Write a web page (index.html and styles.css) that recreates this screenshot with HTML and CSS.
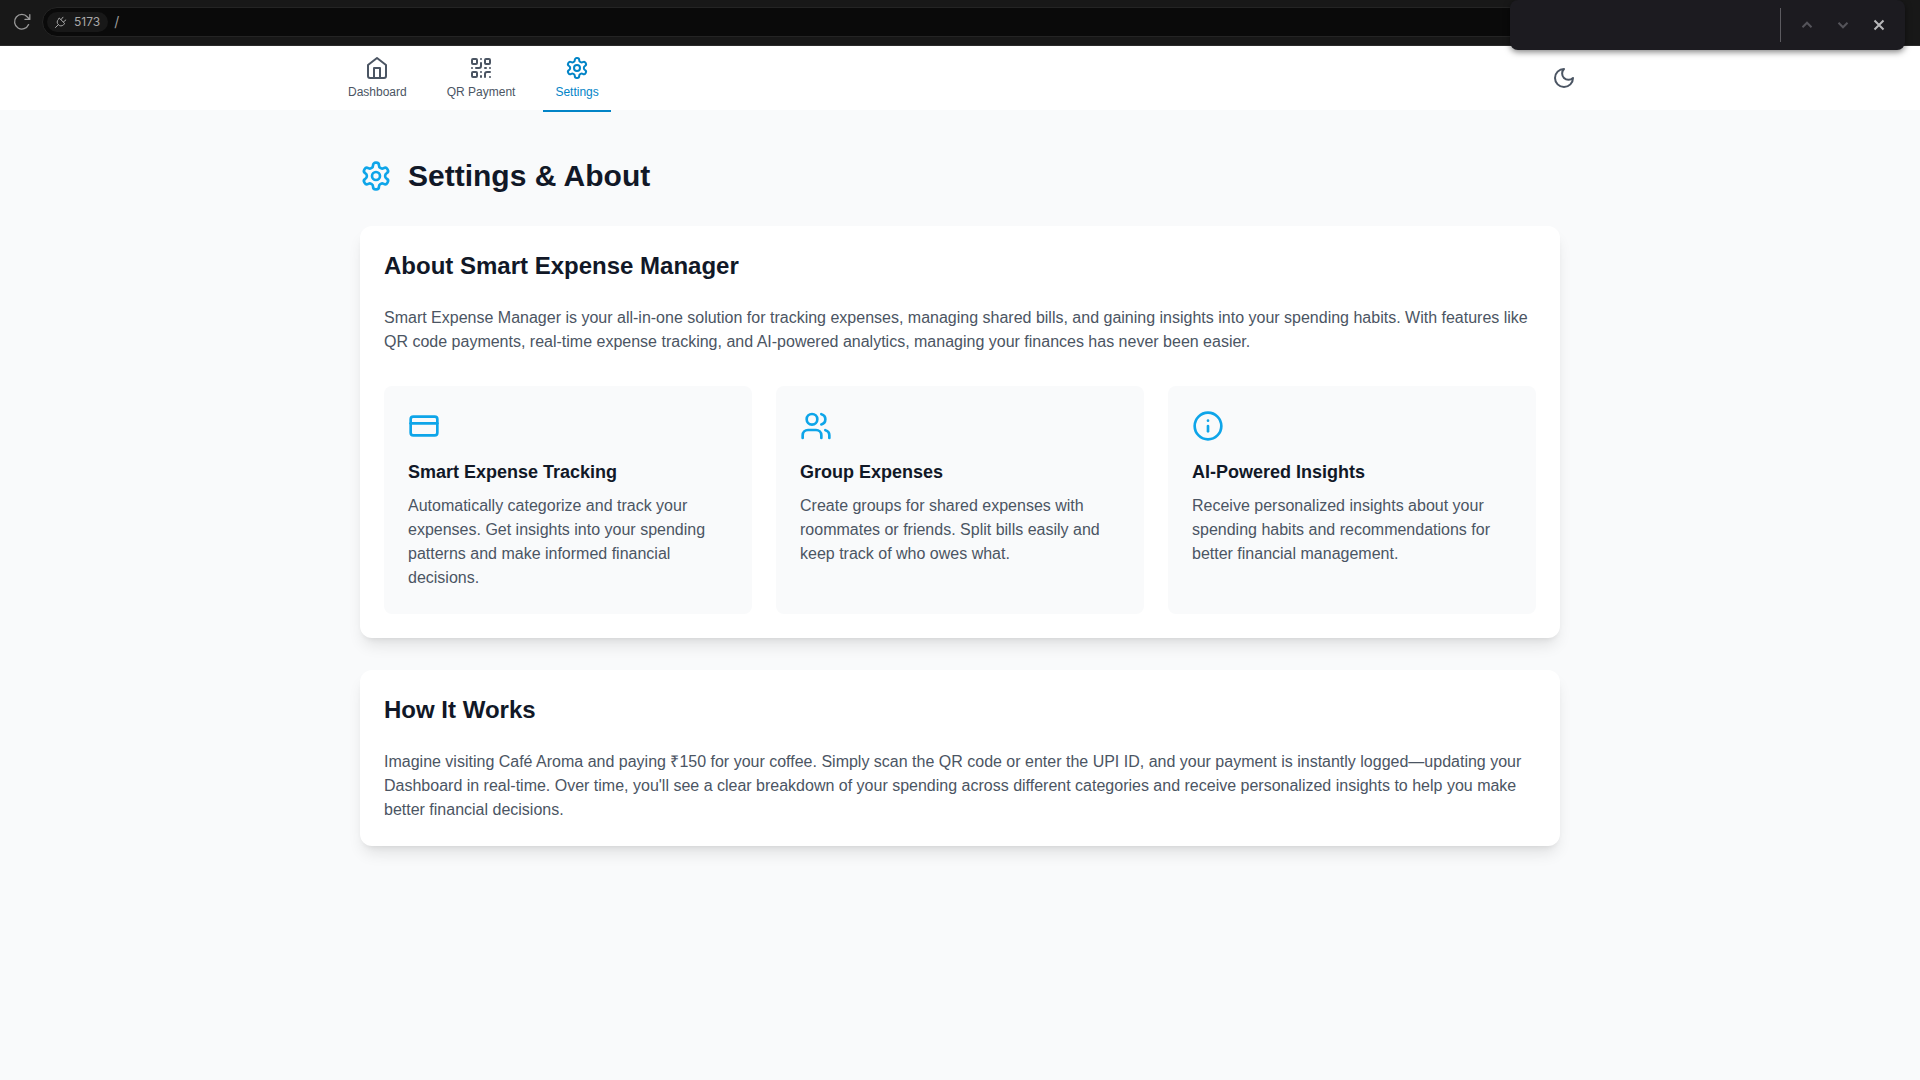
FILE: index.html
```html
<!DOCTYPE html>
<html lang="en">
<head>
<meta charset="utf-8">
<meta name="viewport" content="width=device-width, initial-scale=1">
<title>Smart Expense Manager</title>
<link rel="stylesheet" href="styles.css">
</head>
<body>
<div class="toolbar">
  <button class="toolbar-button" type="button" aria-label="Reload">
    <svg class="reload-icon" viewBox="0 0 18 18"><path d="M15.6 11.6A7.3 7.3 0 1 1 14.4 4L16.6 6.2M16.8 1.6V6.4H12"/></svg>
  </button>
  <div class="address">
    <button class="port" type="button">
      <svg class="plug-icon" viewBox="0 0 12 12"><path d="M0.5 11.5L3.4 8.6M4.4 2.2L9.8 7.6L8.4 8.8A3.2 3.2 0 0 1 3.4 8.6A3.2 3.2 0 0 1 3.2 3.6ZM6 3.6L8 1.2M8.4 6L10.8 4"/></svg>
      <span>5173</span>
    </button>
    <input class="path" type="text" value="/" aria-label="Path">
  </div>
  <div class="find" role="search">
    <input class="find-input" type="text" aria-label="Find in page">
    <div class="find-actions">
      <button class="find-button" type="button" aria-label="Previous" disabled><svg viewBox="0 0 12 12"><path d="M1.5 8.2L6 3.7L10.5 8.2"/></svg></button>
      <button class="find-button" type="button" aria-label="Next" disabled><svg viewBox="0 0 12 12"><path d="M1.5 3.8L6 8.3L10.5 3.8"/></svg></button>
      <button class="find-button find-close" type="button" aria-label="Close"><svg viewBox="0 0 12 12"><path d="M1.5 1.5L10.5 10.5M10.5 1.5L1.5 10.5"/></svg></button>
    </div>
  </div>
</div>

<header class="header">
  <div class="header-inner">
    <nav class="nav">
      <a class="nav-link" href="#dashboard">
        <svg class="icon" viewBox="0 0 24 24"><path d="m3 9 9-7 9 7v11a2 2 0 0 1-2 2H5a2 2 0 0 1-2-2z"/><polyline points="9 22 9 12 15 12 15 22"/></svg>
        <span>Dashboard</span>
      </a>
      <a class="nav-link" href="#qr">
        <svg class="icon" viewBox="0 0 24 24"><rect width="5" height="5" x="3" y="3" rx="1"/><rect width="5" height="5" x="16" y="3" rx="1"/><rect width="5" height="5" x="3" y="16" rx="1"/><path d="M21 16h-3a2 2 0 0 0-2 2v3"/><path d="M21 21v.01"/><path d="M12 7v3a2 2 0 0 1-2 2H7"/><path d="M3 12h.01"/><path d="M12 3h.01"/><path d="M12 16v.01"/><path d="M16 12h1"/><path d="M21 12v.01"/><path d="M12 21v-1"/></svg>
        <span>QR Payment</span>
      </a>
      <a class="nav-link nav-link-active" href="#settings" aria-current="page">
        <svg class="icon" viewBox="0 0 24 24"><path d="M12.22 2h-.44a2 2 0 0 0-2 2v.18a2 2 0 0 1-1 1.73l-.43.25a2 2 0 0 1-2 0l-.15-.08a2 2 0 0 0-2.73.73l-.22.38a2 2 0 0 0 .73 2.73l.15.1a2 2 0 0 1 1 1.72v.51a2 2 0 0 1-1 1.74l-.15.09a2 2 0 0 0-.73 2.73l.22.38a2 2 0 0 0 2.73.73l.15-.08a2 2 0 0 1 2 0l.43.25a2 2 0 0 1 1 1.73V20a2 2 0 0 0 2 2h.44a2 2 0 0 0 2-2v-.18a2 2 0 0 1 1-1.73l.43-.25a2 2 0 0 1 2 0l.15.08a2 2 0 0 0 2.73-.73l.22-.39a2 2 0 0 0-.73-2.73l-.15-.08a2 2 0 0 1-1-1.74v-.5a2 2 0 0 1 1-1.74l.15-.09a2 2 0 0 0 .73-2.73l-.22-.38a2 2 0 0 0-2.73-.73l-.15.08a2 2 0 0 1-2 0l-.43-.25a2 2 0 0 1-1-1.73V4a2 2 0 0 0-2-2z"/><circle cx="12" cy="12" r="3"/></svg>
        <span>Settings</span>
      </a>
    </nav>
    <button class="theme-button" type="button" aria-label="Toggle dark mode">
      <svg class="icon" viewBox="0 0 24 24"><path d="M12 3a6 6 0 0 0 9 9 9 9 0 1 1-9-9Z"/></svg>
    </button>
  </div>
</header>

<main class="main">
  <div class="page-title">
    <svg class="icon icon-large" viewBox="0 0 24 24"><path d="M12.22 2h-.44a2 2 0 0 0-2 2v.18a2 2 0 0 1-1 1.73l-.43.25a2 2 0 0 1-2 0l-.15-.08a2 2 0 0 0-2.73.73l-.22.38a2 2 0 0 0 .73 2.73l.15.1a2 2 0 0 1 1 1.72v.51a2 2 0 0 1-1 1.74l-.15.09a2 2 0 0 0-.73 2.73l.22.38a2 2 0 0 0 2.73.73l.15-.08a2 2 0 0 1 2 0l.43.25a2 2 0 0 1 1 1.73V20a2 2 0 0 0 2 2h.44a2 2 0 0 0 2-2v-.18a2 2 0 0 1 1-1.73l.43-.25a2 2 0 0 1 2 0l.15.08a2 2 0 0 0 2.73-.73l.22-.39a2 2 0 0 0-.73-2.73l-.15-.08a2 2 0 0 1-1-1.74v-.5a2 2 0 0 1 1-1.74l.15-.09a2 2 0 0 0 .73-2.73l-.22-.38a2 2 0 0 0-2.73-.73l-.15.08a2 2 0 0 1-2 0l-.43-.25a2 2 0 0 1-1-1.73V4a2 2 0 0 0-2-2z"/><circle cx="12" cy="12" r="3"/></svg>
    <h1>Settings &amp; About</h1>
  </div>

  <section class="card">
    <h2>About Smart Expense Manager</h2>
    <p>Smart Expense Manager is your all-in-one solution for tracking expenses, managing shared bills, and gaining insights into your spending habits. With features like QR code payments, real-time expense tracking, and AI-powered analytics, managing your finances has never been easier.</p>
    <div class="features">
      <article class="feature">
        <svg class="icon icon-large" viewBox="0 0 24 24"><rect width="20" height="14" x="2" y="5" rx="2"/><line x1="2" x2="22" y1="10" y2="10"/></svg>
        <h3>Smart Expense Tracking</h3>
        <p>Automatically categorize and track your expenses. Get insights into your spending patterns and make informed financial decisions.</p>
      </article>
      <article class="feature">
        <svg class="icon icon-large" viewBox="0 0 24 24"><path d="M16 21v-2a4 4 0 0 0-4-4H6a4 4 0 0 0-4 4v2"/><circle cx="9" cy="7" r="4"/><path d="M22 21v-2a4 4 0 0 0-3-3.87"/><path d="M16 3.13a4 4 0 0 1 0 7.75"/></svg>
        <h3>Group Expenses</h3>
        <p>Create groups for shared expenses with roommates or friends. Split bills easily and keep track of who owes what.</p>
      </article>
      <article class="feature">
        <svg class="icon icon-large" viewBox="0 0 24 24"><circle cx="12" cy="12" r="10"/><path d="M12 16v-4"/><path d="M12 8h.01"/></svg>
        <h3>AI-Powered Insights</h3>
        <p>Receive personalized insights about your spending habits and recommendations for better financial management.</p>
      </article>
    </div>
  </section>

  <section class="card">
    <h2>How It Works</h2>
    <p>Imagine visiting Café Aroma and paying ₹150 for your coffee. Simply scan the QR code or enter the UPI ID, and your payment is instantly logged—updating your Dashboard in real-time. Over time, you'll see a clear breakdown of your spending across different categories and receive personalized insights to help you make better financial decisions.</p>
  </section>
</main>
</body>
</html>
```
FILE: styles.css
```css
*,
*::before,
*::after {
  box-sizing: border-box;
}

body {
  margin: 0;
  min-height: 100vh;
  background: #f9fafb;
  color: #4b5563;
  font-family: "Liberation Sans", Arial, sans-serif;
  font-size: 16px;
  line-height: 24px;
}

h1,
h2,
h3,
p {
  margin: 0;
}

h1,
h2,
h3 {
  color: #111827;
  font-weight: 700;
}

button,
input {
  margin: 0;
  padding: 0;
  border: 0;
  background: none;
  color: inherit;
  font: inherit;
}

svg {
  display: block;
  flex: none;
  fill: none;
  stroke: currentColor;
  stroke-linecap: round;
  stroke-linejoin: round;
}

.icon {
  width: 24px;
  height: 24px;
  stroke-width: 2;
}

.icon-large {
  width: 32px;
  height: 32px;
  color: #0ea5e9;
}

/* Browser toolbar */

.toolbar {
  position: relative;
  display: flex;
  align-items: center;
  gap: 6px;
  height: 46px;
  padding: 0 32px 1px 8px;
  border-bottom: 1px solid #2b2b2b;
  background: #181818;
  color: #9a9a9a;
  font-family: Inter, sans-serif;
  font-size: 12px;
  line-height: 20px;
}

.toolbar-button {
  display: grid;
  place-items: center;
  width: 28px;
  height: 28px;
}

.reload-icon {
  width: 18px;
  height: 18px;
  stroke-width: 1.3;
}

.address {
  display: flex;
  flex: 1;
  align-items: center;
  gap: 6px;
  height: 30px;
  padding: 0 4px;
  border: 1px solid #242424;
  border-radius: 15px;
  background: #0a0a0a;
}

.port {
  display: flex;
  align-items: center;
  gap: 7px;
  height: 20px;
  padding: 0 8px;
  border-radius: 10px;
  background: #181818;
  color: #a8a8a8;
}

.plug-icon {
  width: 12px;
  height: 12px;
  stroke-width: 1;
}

.path {
  flex: 1;
  font-size: 14px;
}

.find {
  position: absolute;
  top: 0;
  right: 15px;
  display: flex;
  align-items: center;
  width: 395px;
  height: 50px;
  padding: 8px;
  border-radius: 8px;
  background: #1c1b20;
  box-shadow: 0 2px 6px rgba(0, 0, 0, 0.5);
}

.find-input {
  flex: 1;
  min-width: 0;
}

.find-actions {
  display: flex;
  align-items: center;
  gap: 8px;
  height: 34px;
  padding: 0 4px 0 12px;
  border-left: 1px solid #5c5b60;
}

.find-button {
  display: grid;
  place-items: center;
  width: 28px;
  height: 28px;
  color: #55545a;
}

.find-button svg {
  width: 12px;
  height: 12px;
  stroke-width: 2;
  stroke-linecap: butt;
  stroke-linejoin: miter;
}

.find-close {
  color: #b8b8ba;
}

/* App header */

.header {
  background: #ffffff;
}

.header-inner {
  display: flex;
  align-items: center;
  justify-content: space-between;
  max-width: 1280px;
  height: 64px;
  margin: 0 auto;
  padding: 0 16px;
}

.nav {
  display: flex;
  align-self: stretch;
  gap: 16px;
}

.nav-link {
  display: flex;
  flex-direction: column;
  align-items: center;
  gap: 4px;
  margin-bottom: -2px;
  padding: 10px 12px;
  border-bottom: 2px solid transparent;
  color: #4b5563;
  font-size: 12px;
  line-height: 16px;
  text-decoration: none;
}

.nav-link-active {
  border-color: #0284c7;
  color: #0284c7;
}

.theme-button {
  padding: 8px;
  border-radius: 8px;
}

/* Page content */

.main {
  display: grid;
  gap: 32px;
  max-width: 1232px;
  margin: 0 auto;
  padding: 48px 16px;
}

.page-title {
  display: flex;
  align-items: center;
  gap: 16px;
}

.page-title h1 {
  font-size: 30px;
  line-height: 36px;
}

.card {
  padding: 24px;
  border-radius: 12px;
  background: #ffffff;
  box-shadow: 0 10px 15px -3px rgba(0, 0, 0, 0.1), 0 4px 6px -4px rgba(0, 0, 0, 0.1);
}

.card h2 {
  margin-bottom: 24px;
  font-size: 24px;
  line-height: 32px;
}

.features {
  display: grid;
  grid-template-columns: repeat(auto-fit, minmax(280px, 1fr));
  gap: 24px;
  margin-top: 32px;
}

.feature {
  padding: 24px;
  border-radius: 8px;
  background: #f9fafb;
}

.feature h3 {
  margin: 16px 0 8px;
  font-size: 18px;
  line-height: 28px;
}
```
